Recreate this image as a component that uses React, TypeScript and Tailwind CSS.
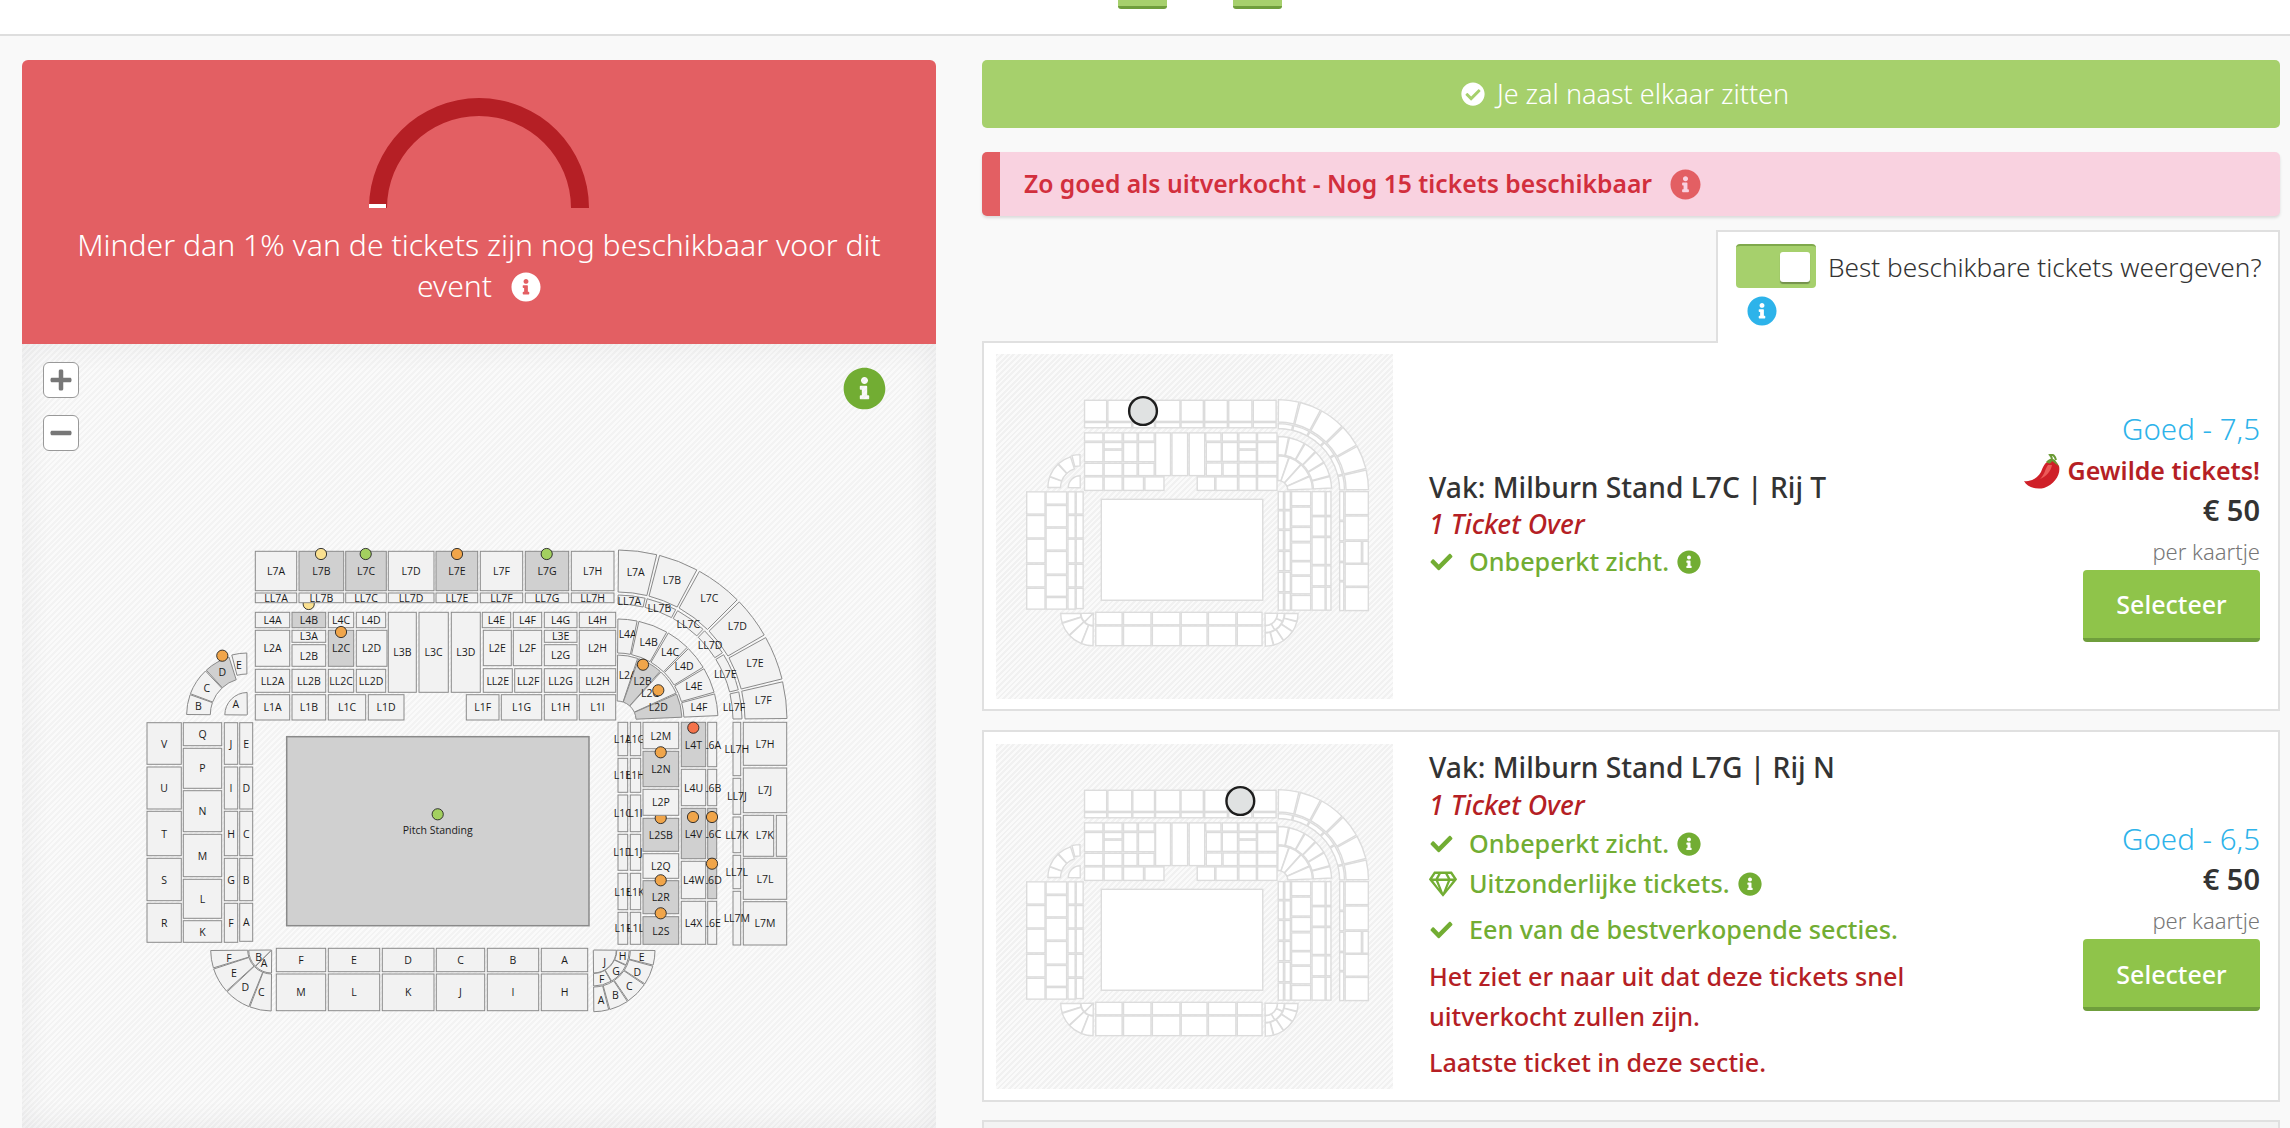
import { FaCheck, FaCheckCircle, FaInfoCircle, FaMinus, FaPlus, FaRegGem } from "react-icons/fa";

type Section = { d?: string; r?: number[]; label: string; x?: number; y?: number; dark?: boolean };

// angles run clockwise from 12 o'clock
function ring(cx: number, cy: number, r0: number, r1: number, a0: number, a1: number) {
  const p = (r: number, a: number) => {
    const t = (a * Math.PI) / 180;
    return `${(cx + r * Math.sin(t)).toFixed(1)} ${(cy - r * Math.cos(t)).toFixed(1)}`;
  };
  const s = a0 + 0.5;
  const e = a1 - 0.5;
  return `M${p(r1, s)} A${r1} ${r1} 0 0 1 ${p(r1, e)} L${p(r0, e)} A${r0} ${r0} 0 0 0 ${p(r0, s)} Z`;
}

const col = (label: string, x0: number, x1: number, y0: number, y1: number, dark = false): Section => ({
  label,
  r: [x0, y0, x1 - x0, y1 - y0],
  dark,
});

const ne = (r0: number, r1: number, a0: number, a1: number) => ring(617, 720, r0, r1, a0, a1);
const nw = (r0: number, r1: number, a0: number, a1: number) => ring(247.3, 715, r0, r1, a0, a1);
const sw = (r0: number, r1: number, a0: number, a1: number) => ring(271.7, 950, r0, r1, a0, a1);
const se = (r0: number, r1: number, a0: number, a1: number) => ring(593.3, 950, r0, r1, a0, a1);

const sections: Section[] = [
  col("L7A", 255.3, 296.7, 551.3, 590.7),
  col("L7B", 299, 343.7, 551.3, 590.7, true),
  col("L7C", 345.7, 386.3, 551.3, 590.7, true),
  col("L7D", 388.3, 434, 551.3, 590.7),
  col("L7E", 436, 477.7, 551.3, 590.7, true),
  col("L7F", 480.3, 522.7, 551.3, 590.7),
  col("L7G", 525.3, 568.7, 551.3, 590.7, true),
  col("L7H", 571.3, 614, 551.3, 590.7),
  col("LL7A", 255.3, 296.7, 593, 602.7),
  col("LL7C", 345.7, 386.3, 593, 602.7),
  col("LL7D", 388.3, 434, 593, 602.7),
  col("LL7E", 436, 477.7, 593, 602.7),
  col("LL7F", 480.3, 522.7, 593, 602.7),
  col("LL7G", 525.3, 568.7, 593, 602.7),
  col("LL7H", 571.3, 614, 593, 602.7),
  col("L4A", 255.3, 289.7, 612.3, 627.7),
  col("L4C", 328.3, 353.7, 612.3, 627.7),
  col("L4D", 356.3, 385.7, 612.3, 627.7),
  col("L3B", 388.3, 416.3, 612.3, 692.3),
  col("L3C", 419, 448.3, 612.3, 692.3),
  col("L3D", 451.3, 480.3, 612.3, 692.3),
  col("L2A", 255.3, 289.7, 630.3, 666.3),
  col("L3A", 292, 325.7, 630.3, 642.3),
  col("L2B", 292, 325.7, 644.7, 666.3),
  col("L2C", 328.3, 353.7, 630.3, 666.3, true),
  col("L2D", 356.3, 387, 630.3, 666.3),
  col("LL2A", 255.3, 289.7, 669.3, 692.3),
  col("LL2B", 292, 325.7, 669.3, 692.3),
  col("LL2C", 328.3, 353.7, 669.3, 692.3),
  col("LL2D", 356.3, 385.7, 669.3, 692.3),
  col("L1A", 255.3, 289.7, 694.7, 720),
  col("L1B", 292, 325.7, 694.7, 720),
  col("L1C", 328.3, 365.7, 694.7, 720),
  col("L1D", 368.3, 404, 694.7, 720),
  col("L4E", 482.3, 510.7, 612.3, 627.7),
  col("L4F", 513.3, 541.7, 612.3, 627.7),
  col("L4G", 544.3, 577, 612.3, 627.7),
  col("L4H", 579.3, 615.7, 612.3, 627.7),
  col("L2E", 483.3, 511.3, 630.3, 665.7),
  col("L2F", 513.3, 541.7, 630.3, 665.7),
  col("L3E", 544.3, 577, 630.3, 642.3),
  col("L2G", 544.3, 577, 644.7, 665.7),
  col("L2H", 579.3, 615.7, 630.3, 665.7),
  col("LL2E", 483.3, 512.3, 668.7, 692.3),
  col("LL2F", 514.7, 541.7, 668.7, 692.3),
  col("LL2G", 544.3, 577, 668.7, 692.3),
  col("LL2H", 579.3, 615.7, 668.7, 692.3),
  col("L1F", 466.3, 499, 694.7, 720),
  col("L1G", 501.3, 541.7, 694.7, 720),
  col("L1H", 544.3, 577, 694.7, 720),
  col("L1I", 579.3, 615.7, 694.7, 720),

  // west stand
  col("V", 147, 181.3, 722.7, 764.3),
  col("U", 147, 181.3, 767, 809),
  col("T", 147, 181.3, 811.3, 855.7),
  col("S", 147, 181.3, 858.3, 900.7),
  col("R", 147, 181.3, 903.3, 942.3),
  col("Q", 183.3, 221.7, 722.7, 745.7),
  col("P", 183.3, 221.7, 748.3, 788.3),
  col("N", 183.3, 221.7, 790.7, 831.7),
  col("M", 183.3, 221.7, 834.3, 876.7),
  col("L", 183.3, 221.7, 879.3, 918.3),
  col("K", 183.3, 221.7, 920.7, 942.3),
  col("J", 224.3, 237.7, 722.7, 764.3),
  col("I", 224.3, 237.7, 767, 809),
  col("H", 224.3, 237.7, 811.3, 855.7),
  col("G", 224.3, 237.7, 858.3, 900.7),
  col("F", 224.3, 237.7, 903.3, 942.3),
  col("E", 239.7, 252.7, 722.7, 764.3),
  col("D", 239.7, 252.7, 767, 809),
  col("C", 239.7, 252.7, 811.3, 855.7),
  col("B", 239.7, 252.7, 858.3, 900.7),
  col("A", 239.7, 252.7, 903.3, 941.3),

  // south stand
  col("F", 276.3, 325.7, 948.3, 971.7),
  col("E", 328.3, 379.7, 948.3, 971.7),
  col("D", 382.3, 434, 948.3, 971.7),
  col("C", 436.3, 484.7, 948.3, 971.7),
  col("B", 487.3, 538.7, 948.3, 971.7),
  col("A", 541.3, 587.7, 948.3, 971.7),
  col("M", 276.3, 325.7, 974, 1010.7),
  col("L", 328.3, 379.7, 974, 1010.7),
  col("K", 382.3, 434, 974, 1010.7),
  col("J", 436.3, 484.7, 974, 1010.7),
  col("I", 487.3, 538.7, 974, 1010.7),
  col("H", 541.3, 587.7, 974, 1010.7),

  // east stand
  col("L1A", 618, 627.7, 722.3, 755.7),
  col("L1B", 618, 627.7, 758.3, 792.3),
  col("L1C", 618, 627.7, 795, 831.7),
  col("L1D", 618, 627.7, 834.3, 870.3),
  col("L1E", 618, 627.7, 873.3, 909.7),
  col("L1F", 618, 627.7, 912.3, 944.3),
  col("L1G", 630.3, 640.7, 722.3, 755.7),
  col("L1H", 630.3, 640.7, 758.3, 792.3),
  col("L1I", 630.3, 640.7, 795, 831.7),
  col("L1J", 630.3, 640.7, 834.3, 870.3),
  col("L1K", 630.3, 640.7, 873.3, 909.7),
  col("L1L", 630.3, 640.7, 912.3, 944.3),
  col("L2M", 643, 678.7, 722.3, 748.7),
  col("L2N", 643, 678.7, 751.3, 786.7, true),
  col("L2SB", 643, 678.7, 818.3, 851.3, true),
  col("L2Q", 643, 678.7, 853.7, 878.3),
  col("L2R", 643, 678.7, 880.7, 913.7, true),
  col("L2S", 643, 678.7, 916.7, 944.3, true),
  col("L6A", 707.7, 716.7, 722.3, 766.7),
  col("L6B", 707.7, 716.7, 769.3, 805.7),
  col("L6C", 707.7, 716.7, 808.3, 858.7, true),
  col("L6D", 707.7, 716.7, 861.3, 898.7, true),
  col("L6E", 707.7, 716.7, 901.3, 944.3),
  col("L4T", 681.3, 705.7, 722.3, 766.7, true),
  col("L4U", 681.3, 705.7, 769.3, 805.7),
  col("L4V", 681.3, 705.7, 808.3, 858.7, true),
  col("L4W", 681.3, 705.7, 861.3, 898.7),
  col("L4X", 681.3, 705.7, 901.3, 944.3),
  col("L7H", 743.3, 786.7, 722.3, 765.3),
  col("L7J", 743.3, 786.7, 768, 812.7),
  { ...col("L7K", 743.3, 773.7, 815.3, 856.3), x: 764.7, y: 835.3 },
  col("", 776.3, 786.7, 815.3, 856.3),
  col("L7L", 743.3, 786.7, 858.3, 899.3),
  col("L7M", 743.3, 786.7, 901.7, 945),
  // the LL7 labels run over the block next to them
  col("LL7H", 733, 740.7, 722.3, 775.7),
  col("LL7J", 733, 740.7, 778.3, 814.3),
  col("LL7K", 733, 740.7, 817, 852.7),
  col("LL7L", 733, 740.7, 855.3, 888.7),
  col("LL7M", 733, 740.7, 891.3, 945),

  // north-east curve
  { d: ne(128, 170, 0, 14), label: "L7A", x: 635.7, y: 572.3 },
  { d: ne(128, 170, 14, 28.5), label: "L7B", x: 672, y: 580 },
  { d: ne(128, 170, 28.5, 45.5), label: "L7C", x: 709.3, y: 598.3 },
  { d: ne(128, 170, 45.5, 60.5), label: "L7D", x: 737.3, y: 626.3 },
  { d: ne(128, 170, 60.5, 76.5), label: "L7E", x: 755, y: 663.3 },
  { d: ne(128, 170, 76.5, 90), label: "L7F", x: 763.3, y: 700 },
  { d: ne(116, 125, 0, 13.5), label: "LL7A", x: 629.3, y: 600.7 },
  { d: ne(116, 125, 13.5, 28.5), label: "LL7B", x: 659.3, y: 608.3 },
  { d: ne(116, 125, 28.5, 44), label: "LL7C", x: 688.3, y: 624.3 },
  { d: ne(116, 125, 44, 58), label: "LL7D", x: 710, y: 645.3 },
  { d: ne(116, 125, 58, 76.5), label: "LL7E", x: 725.3, y: 674.3 },
  { d: ne(116, 125, 76.5, 90), label: "LL7F", x: 734, y: 706.7 },
  { d: ne(67, 101, 0, 12), label: "L4A", x: 627.7, y: 634.3 },
  { d: ne(67, 101, 12, 30), label: "L4B", x: 648.7, y: 641.7 },
  { d: ne(67, 101, 30, 44.5), label: "L4C", x: 670, y: 651.7 },
  { d: ne(67, 101, 44.5, 59), label: "L4D", x: 684, y: 666 },
  { d: ne(67, 101, 59, 74.5), label: "L4E", x: 694, y: 686 },
  { d: ne(67, 101, 74.5, 88), label: "L4F", x: 699, y: 707.3 },
  { d: ne(19, 65, 0, 19), label: "L2A", x: 627.7, y: 675.3 },
  { d: ne(19, 65, 19, 42), label: "L2B", x: 642.7, y: 681, dark: true },
  { d: ne(19, 65, 42, 66), label: "L2C", x: 650, y: 692.7 },
  { d: ne(19, 65, 66, 88), label: "L2D", x: 658.3, y: 706.7, dark: true },

  // north-west curve
  { d: nw(37, 60.7, 270, 290), label: "B", x: 198.3, y: 705.7 },
  { d: nw(37, 60.7, 290, 317), label: "C", x: 206.7, y: 687.7 },
  { d: nw(37, 60.7, 317, 343), label: "D", x: 222.3, y: 672.3, dark: true },
  { d: nw(41, 62, 345, 360), label: "E", x: 239, y: 665.3 },
  { d: nw(0.5, 22.5, 270, 360), label: "A", x: 235.7, y: 703.7 },

  // south-west curve
  { d: sw(24, 61, 252.4, 270), label: "F", x: 229, y: 958.3 },
  { d: sw(24, 61, 227.3, 252.4), label: "E", x: 234, y: 973.3 },
  { d: sw(24, 61, 201.5, 227.3), label: "D", x: 245.3, y: 986.7 },
  { d: sw(24, 61, 180, 201.5), label: "C", x: 261.3, y: 992.3 },
  { d: sw(0.5, 23, 225, 270), label: "B", x: 258.7, y: 956.7 },
  { d: sw(0.5, 23, 180, 225), label: "A", x: 264, y: 962.7 },

  // south-east curve
  { d: se(37, 61.7, 90, 104.7), label: "E", x: 641.7, y: 956.7 },
  { d: se(37, 61.7, 104.7, 123.7), label: "D", x: 637.3, y: 971.7 },
  { d: se(37, 61.7, 123.7, 146), label: "C", x: 629.3, y: 985.7 },
  { d: se(37, 61.7, 146, 165), label: "B", x: 615.3, y: 994.7 },
  { d: se(37, 61.7, 165, 180), label: "A", x: 601, y: 1000 },
  { d: se(23.5, 36, 90, 115), label: "H", x: 622.7, y: 955.7 },
  { d: se(23.5, 36, 115, 150), label: "G", x: 616, y: 970.7 },
  { d: se(23.5, 36, 150, 180), label: "F", x: 601.7, y: 979.3 },
  { d: se(0.5, 23, 90, 180), label: "J", x: 604.7, y: 961.7 },
];

// these sit on top of the markers
const overlay: Section[] = [
  col("LL7B", 299, 343.7, 593, 602.7),
  col("L4B", 292, 325.7, 612.3, 627.7, true),
  col("L2P", 643, 678.7, 789.3, 815.3),
];

const markers: [number, number, string][] = [
  [321, 554, "#fae08f"],
  [365.7, 554, "#a3d05f"],
  [457, 554, "#f0a54a"],
  [546.7, 554, "#a3d05f"],
  [308.7, 604, "#fae08f"],
  [341, 632, "#f0a54a"],
  [222.3, 655.7, "#f0a54a"],
  [643, 664.7, "#f0a54a"],
  [658.3, 690.3, "#f0a54a"],
  [693.3, 727.7, "#f5734a"],
  [660.7, 752.3, "#f0a54a"],
  [660.7, 818, "#f0a54a"],
  [693, 817, "#f0a54a"],
  [712, 817, "#f0a54a"],
  [712, 863.7, "#f0a54a"],
  [660.7, 880.3, "#f0a54a"],
  [660.7, 913.3, "#f0a54a"],
  [437.7, 814.3, "#a3d05f"],
];

function Shape({ s, plain }: { s: Section; plain?: boolean }) {
  const fill = plain ? "#ffffff" : s.dark ? "#d0d0d0" : "#f2f2f2";
  const stroke = plain ? "#dcdcdc" : "#8a8a8a";
  const sw2 = plain ? 2.6 : 1;
  const lx = s.x ?? (s.r ? s.r[0] + s.r[2] / 2 : 0);
  const ly = s.y ?? (s.r ? s.r[1] + s.r[3] / 2 : 0);
  return (
    <>
      {s.r ? (
        <rect x={s.r[0]} y={s.r[1]} width={s.r[2]} height={s.r[3]} fill={fill} stroke={stroke} strokeWidth={sw2} />
      ) : (
        <path d={s.d} fill={fill} stroke={stroke} strokeWidth={sw2} />
      )}
      {!plain && s.label ? (
        <text x={lx} y={ly} textAnchor="middle" dominantBaseline="central" fontSize="10.5" fontWeight="500" fill="#1a1a1a">
          {s.label}
        </text>
      ) : null}
    </>
  );
}

function StadiumMap() {
  return (
    <svg viewBox="22 344 914 784" className="block h-[784px] w-[914px] font-['Open_Sans',sans-serif]">
      {sections.map((s, i) => (
        <Shape key={i} s={s} />
      ))}
      <rect x="286.7" y="736.7" width="302.3" height="189" fill="#d0d0d0" stroke="#8a8a8a" strokeWidth="1.5" />
      {markers.map(([x, y, c], i) => (
        <circle key={i} cx={x} cy={y} r="5.6" fill={c} stroke="#222" strokeWidth="0.9" />
      ))}
      {overlay.map((s, i) => (
        <Shape key={i} s={s} />
      ))}
      <text x="437.7" y="830" textAnchor="middle" dominantBaseline="central" fontSize="10.5" fontWeight="500" fill="#1a1a1a">
        Pitch Standing
      </text>
    </svg>
  );
}

function ThumbMap({ cx, cy }: { cx: number; cy: number }) {
  return (
    <div className="h-[345px] w-[397px] shrink-0 bg-[repeating-linear-gradient(135deg,#f1f1f1_0,#f1f1f1_2px,#fafafa_2px,#fafafa_4px)]">
      <svg viewBox="89.5 464.6 743.4 646" className="block h-[345px] w-[397px]">
        {sections.concat(overlay).map((s, i) => (
          <Shape key={i} s={s} plain />
        ))}
        <rect x="286.7" y="736.7" width="302.3" height="189" fill="#fff" stroke="#dcdcdc" strokeWidth="2.6" />
        <circle cx={cx} cy={cy} r="26" fill="#e0e2e2" stroke="#1e1e1e" strokeWidth="4.5" />
      </svg>
    </div>
  );
}

function Chili() {
  return (
    <svg viewBox="0 0 36 35" className="h-[35px] w-[36px]">
      <path d="M23 8 C27 5 32 6 35 12 C37 20 31 30 20 34 C12 36 3 33 0 27 C6 28 13 25 17 18 C19 13 20 10 23 8 Z" fill="#cf2028" />
      <path d="M24 11 C21 15 21 20 16 25 C22 23 27 17 28 11 Z" fill="#ec5a58" />
      <path d="M22 8 C25 10 27 10 28 7 C30 9 33 10 35 13 C33 9 32 6 29 5 C26 4 24 6 22 8 Z" fill="#6a9a34" />
      <path d="M28 6 C28 4 27 2 26 1 C29 0 31 2 32 6" fill="none" stroke="#6a9a34" strokeWidth="2" />
    </svg>
  );
}

function GreenLine({ children, info, gem }: { children: string; info?: boolean; gem?: boolean }) {
  return (
    <div className="flex h-[40px] items-center text-[25.2px] font-medium text-[#72ad33]">
      <span className="flex w-[40px] shrink-0">
        {gem ? <FaRegGem className="h-[26px] w-[28px]" /> : <FaCheck className="h-[22px] w-[25px]" />}
      </span>
      {children}
      {info ? <FaInfoCircle className="ml-[8px] h-[24px] w-[24px]" /> : null}
    </div>
  );
}

function PriceColumn({ rating, hot }: { rating: string; hot?: boolean }) {
  return (
    <div className="ml-auto flex w-[300px] shrink-0 flex-col items-end pr-[18px] text-right">
      <div className="-mt-[2px] mb-[2px] text-[29.5px] leading-[40px] font-light text-[#2db3ea]">{rating}</div>
      {hot ? (
        <div className="flex h-[41px] items-center gap-[8px] text-[25px] font-semibold text-[#b51f25]">
          <Chili />
          Gewilde tickets!
        </div>
      ) : null}
      <div className="-mt-[3px] text-[29px] leading-[41px] font-semibold text-[#333]">€ 50</div>
      <div className="mt-[1px] text-[22px] leading-[41px] font-light text-[#777]">per kaartje</div>
      <button className="mt-[-2px] h-[72px] w-[177px] rounded-[4px] border-b-[4px] border-[#6f9e3c] bg-[#8fc44a] pt-[3px] text-[25px] font-medium text-white">
        Selecteer
      </button>
    </div>
  );
}

export default function App() {
  return (
    <div className="h-[1128px] w-[2290px] overflow-hidden bg-[#f9f9f9] font-['Noto_Sans',sans-serif]">
      <header className="flex h-[36px] gap-[66px] border-b-2 border-[#dedede] bg-white pl-[1118px]">
        <span className="h-[9px] w-[49px] rounded-b-[3px] border-b-[3px] border-[#6f9e3c] bg-[#a6d06c]" />
        <span className="h-[9px] w-[49px] rounded-b-[3px] border-b-[3px] border-[#6f9e3c] bg-[#a6d06c]" />
      </header>

      <main className="flex items-start gap-[46px] pt-[24px] pl-[22px]">
        <section className="w-[914px] shrink-0 overflow-hidden rounded-t-[6px]">
          <div className="flex h-[284px] flex-col items-center bg-[#e35f63] pt-[38px] text-white">
            <svg viewBox="0 0 220 110" className="h-[110px] w-[220px]">
              <path d="M0 110 A110 110 0 0 1 220 110 L202 110 A92 92 0 0 0 18 110 Z" fill="#b51f25" />
              <rect x="0" y="106" width="17" height="4" fill="#fff" />
            </svg>
            <p className="mt-[16px] text-center text-[30.2px] leading-[41px] font-light">
              Minder dan 1% van de tickets zijn nog beschikbaar voor dit
              <br />
              event
              <FaInfoCircle className="ml-[19px] inline h-[30px] w-[30px] align-[-5px]" />
            </p>
          </div>
          <div className="relative h-[784px] bg-[repeating-linear-gradient(135deg,#f3f3f3_0,#f3f3f3_2px,#fafafa_2px,#fafafa_4px)] shadow-[inset_0_0_30px_rgba(60,60,80,0.08)]">
            <StadiumMap />
            <button className="absolute top-[18px] left-[21px] flex h-[36px] w-[36px] items-center justify-center rounded-[6px] border border-[#999] bg-white text-[#777]">
              <FaPlus className="h-[24px] w-[24px]" />
            </button>
            <button className="absolute top-[71px] left-[21px] flex h-[36px] w-[36px] items-center justify-center rounded-[6px] border border-[#999] bg-white text-[#777]">
              <FaMinus className="h-[24px] w-[24px]" />
            </button>
            <FaInfoCircle className="absolute top-[23px] left-[821px] h-[43px] w-[43px] text-[#72ad33]" />
          </div>
        </section>

        <section className="w-[1298px] shrink-0">
          <div className="flex h-[68px] items-center justify-center gap-[12px] rounded-[5px] bg-[#a6d06c] pr-[12px] text-[27px] font-light text-white">
            <FaCheckCircle className="h-[24px] w-[24px]" />
            Je zal naast elkaar zitten
          </div>

          <div className="mt-[24px] flex h-[64px] items-center rounded-[5px] border-l-[18px] border-[#e35f63] bg-[#f9d2e0] pl-[24px] text-[24.7px] font-semibold text-[#d22f3d] shadow-[0_2px_3px_rgba(0,0,0,0.12)]">
            Zo goed als uitverkocht - Nog 15 tickets beschikbaar
            <FaInfoCircle className="ml-[18px] h-[31px] w-[31px] text-[#e35f63]" />
          </div>

          <div className="flex justify-end pt-[14px]">
            <div className="relative z-10 -mb-[2px] h-[113px] w-[564px] border-x-2 border-t-2 border-[#e0e0e0] bg-white pt-[12px] pl-[18px]">
              <div className="flex items-start gap-[12px]">
                <div className="flex h-[44px] w-[80px] items-center justify-end rounded-[4px] border-t-2 border-[#7fa94c] bg-[#a6d06c] pr-[6px]">
                  <span className="h-[30px] w-[30px] rounded-[3px] bg-white shadow-[0_2px_1px_rgba(0,0,0,0.3)]" />
                </div>
                <span className="text-[26.2px] leading-[46px] font-light text-[#333]">Best beschikbare tickets weergeven?</span>
              </div>
              <FaInfoCircle className="mt-[6px] ml-[11px] h-[30px] w-[30px] text-[#2db3ea]" />
            </div>
          </div>

          <article className="flex h-[370px] items-center border-2 border-[#e0e0e0] bg-white pl-[12px]">
            <ThumbMap cx={364.8} cy={571.3} />
            <div className="ml-[36px] pb-[3px]">
              <h3 className="text-[28.2px] leading-[38px] font-medium text-[#333]">Vak: Milburn Stand L7C | Rij T</h3>
              <p className="text-[26.8px] leading-[36px] font-medium text-[#b51f25] italic">1 Ticket Over</p>
              <GreenLine info>Onbeperkt zicht.</GreenLine>
            </div>
            <PriceColumn rating="Goed - 7,5" hot />
          </article>

          <article className="mt-[19px] flex h-[372px] items-center border-2 border-[#e0e0e0] bg-white pl-[12px]">
            <ThumbMap cx={547} cy={571.3} />
            <div className="ml-[36px] pb-[3px]">
              <h3 className="text-[28.2px] leading-[38px] font-medium text-[#333]">Vak: Milburn Stand L7G | Rij N</h3>
              <p className="text-[26.8px] leading-[38px] font-medium text-[#b51f25] italic">1 Ticket Over</p>
              <GreenLine info>Onbeperkt zicht.</GreenLine>
              <GreenLine gem info>Uitzonderlijke tickets.</GreenLine>
              <div className="mt-[6px]">
                <GreenLine>Een van de bestverkopende secties.</GreenLine>
              </div>
              <p className="mt-[6px] text-[25.2px] leading-[40px] font-medium text-[#b51f25]">
                Het ziet er naar uit dat deze tickets snel
                <br />
                uitverkocht zullen zijn.
              </p>
              <p className="mt-[6px] text-[25.2px] leading-[40px] font-medium text-[#b51f25]">Laatste ticket in deze sectie.</p>
            </div>
            <PriceColumn rating="Goed - 6,5" />
          </article>

          <div className="mt-[18px] h-[40px] border-2 border-[#e0e0e0] bg-[#f3f3f3]" />
        </section>
      </main>
    </div>
  );
}
